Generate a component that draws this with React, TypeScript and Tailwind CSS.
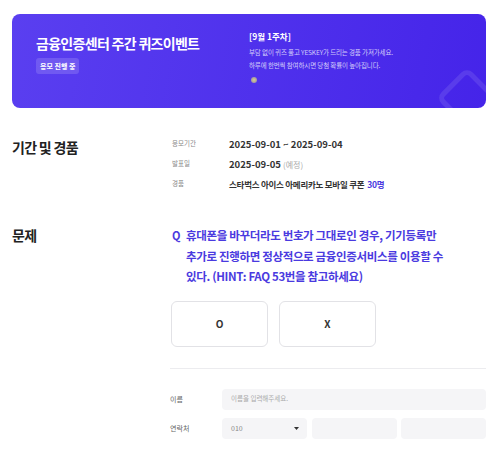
import React from "react";

export default function App() {
  return (
    <div
      className="w-[500px] h-[453px] overflow-hidden bg-white text-[#222]"
      style={{ fontFamily: '"Noto Sans CJK KR", "Noto Sans", sans-serif' }}
    >
      <div className="pt-[14px] pl-[12px] pr-[14px]">
        {/* Banner */}
        <div className="relative overflow-hidden h-[94px] rounded-[8px] bg-[linear-gradient(100deg,#5a3ff0,#4524e9)] flex">
          <div className="absolute right-[-3px] top-[62px] w-[44px] h-[44px] rotate-45 rounded-[8px] border-[5px] border-white/10" />
          <div className="w-[237px] pl-[24px] pt-[19px] flex flex-col items-start">
            <div className="text-white font-bold text-[14px] tracking-[-0.05em] leading-[20px]">
              금융인증센터 주간 퀴즈이벤트
            </div>
            <div className="mt-[5px] h-[16px] px-[4px] rounded-[3px] bg-white/15 text-white text-[7px] font-bold leading-[16px]">
              응모 진행 중
            </div>
          </div>
          <div className="pt-[16px] flex flex-col items-start">
            <div className="text-white font-bold text-[8.5px] leading-[12px]">[9월 1주차]</div>
            <div className="mt-[4px] text-white/75 text-[6.5px] leading-[13px] tracking-[-0.02em]">
              부담 없이 퀴즈 풀고 YESKEY가 드리는 경품 가져가세요.
            </div>
            <div className="text-white/75 text-[6.5px] leading-[13px] tracking-[-0.02em]">
              하루에 한번씩 참여하시면 당첨 확률이 높아집니다.
            </div>
            <div className="mt-[5px] ml-[2px] w-[6px] h-[6px] rounded-full bg-[radial-gradient(circle,#d9d08a,#8a7fb0)]" />
          </div>
        </div>

        {/* Section 1 */}
        <div className="flex mt-[27px]">
          <div className="w-[158px] text-[14px] font-bold tracking-[-0.05em] leading-[20px] pt-[2px]">
            기간 및 경품
          </div>
          <div className="flex flex-col gap-[6px] pl-[2px] pt-[2px]">
            <div className="flex items-center h-[14px]">
              <div className="w-[57px] text-[6.5px] text-[#888]">응모기간</div>
              <div className="text-[9.5px] font-bold text-[#333]">2025-09-01 ~ 2025-09-04</div>
            </div>
            <div className="flex items-center h-[14px]">
              <div className="w-[57px] text-[6.5px] text-[#888]">발표일</div>
              <div className="text-[9.5px] font-bold text-[#333]">
                2025-09-05 <span className="font-normal text-[#aaa] text-[8px]">(예정)</span>
              </div>
            </div>
            <div className="flex items-center h-[14px]">
              <div className="w-[57px] text-[6.5px] text-[#888]">경품</div>
              <div className="text-[8.5px] font-bold text-[#333] tracking-[-0.03em]">
                스타벅스 아이스 아메리카노 모바일 쿠폰
                <span className="ml-[3px] text-[#4a3ae0]">30명</span>
              </div>
            </div>
          </div>
        </div>

        {/* Section 2 */}
        <div className="flex mt-[34px]">
          <div className="w-[158px] text-[14px] font-bold tracking-[-0.05em] leading-[20px]">문제</div>
          <div className="flex-1">
            <div className="flex pl-[2px]">
              <div className="w-[14px] text-[11px] font-bold text-[#4a3ae0] leading-[20.5px]">Q</div>
              <div className="text-[11.5px] font-bold text-[#4a3ae0] leading-[20.5px] tracking-[-0.03em]">
                휴대폰을 바꾸더라도 번호가 그대로인 경우, 기기등록만
                <br />
                추가로 진행하면 정상적으로 금융인증서비스를 이용할 수
                <br />
                있다. (HINT: FAQ 53번을 참고하세요)
              </div>
            </div>
            <div className="flex gap-[11px] mt-[14px] pl-[1px]">
              <div className="w-[97px] h-[46px] rounded-[6px] border border-[#e2e2e6] flex items-center justify-center text-[10px] font-bold text-[#333]">
                O
              </div>
              <div className="w-[97px] h-[46px] rounded-[6px] border border-[#e2e2e6] flex items-center justify-center text-[10px] font-bold text-[#333]">
                X
              </div>
            </div>
            <div className="mt-[21px] h-[1px] bg-[#ececef]" />
            <div className="mt-[20px] flex items-center">
              <div className="w-[52px] text-[7px] text-[#666]">이름</div>
              <div className="w-[264px] h-[21px] rounded-[4px] bg-[#f5f5f7] flex items-center px-[9px] text-[6.5px] text-[#aaa]">
                이름을 입력해주세요.
              </div>
            </div>
            <div className="mt-[8px] flex items-center">
              <div className="w-[52px] text-[7px] text-[#666]">연락처</div>
              <div className="grid grid-cols-[85px_85px_85px] gap-[4.5px]">
                <div className="h-[21px] rounded-[4px] bg-[#f5f5f7] flex items-center justify-between pl-[9px] pr-[8px] text-[7px] text-[#888]">
                  <span>010</span>
                  <svg width="5" height="3" viewBox="0 0 5 3">
                    <path d="M0 0 L5 0 L2.5 3 Z" fill="#333" />
                  </svg>
                </div>
                <div className="h-[21px] rounded-[4px] bg-[#f5f5f7]" />
                <div className="h-[21px] rounded-[4px] bg-[#f5f5f7]" />
              </div>
            </div>
          </div>
        </div>
      </div>
    </div>
  );
}
